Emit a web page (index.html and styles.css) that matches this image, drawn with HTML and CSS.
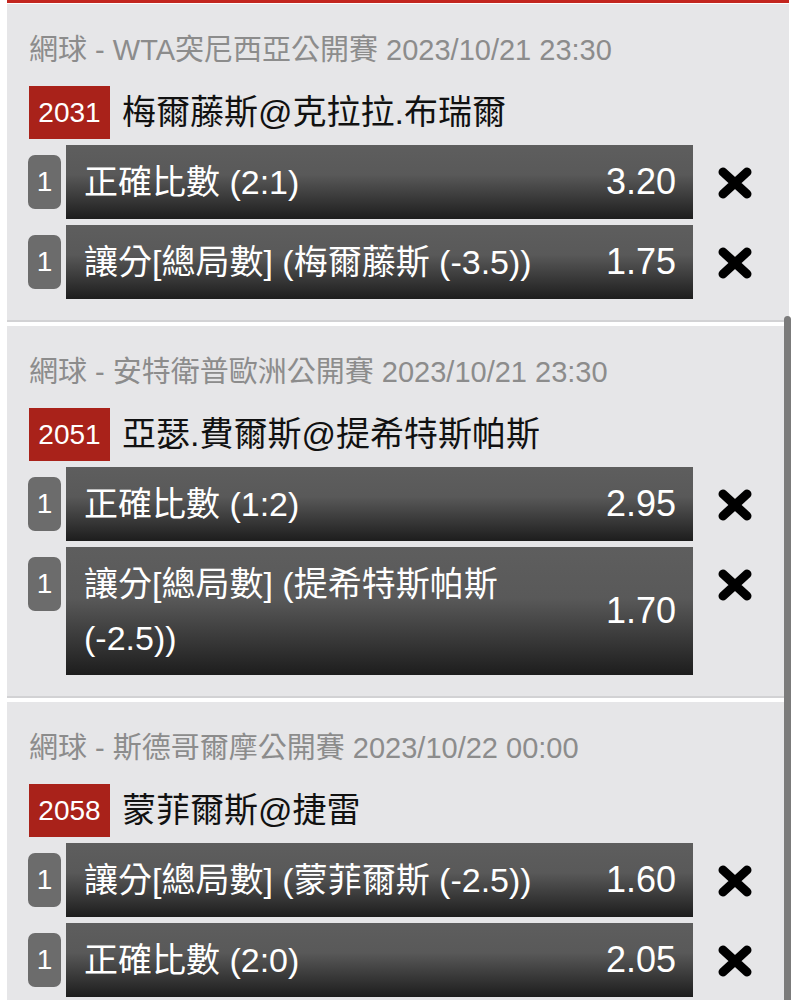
FILE: index.html
```html
<!DOCTYPE html>
<html>
  <head>
    <meta content="text/html; charset=utf-8" http-equiv="content-type">
    <title>投注單</title>
    <link rel="stylesheet" href="styles.css">
  </head>
  <body>
    <div class="slip">
      <div class="topbar"></div>

      <div class="event">
        <div class="league">網球 - WTA突尼西亞公開賽 2023/10/21 23:30</div>
        <div class="match">
          <span class="code">2031</span>
          <span class="teams">梅爾藤斯@克拉拉.布瑞爾</span>
        </div>
        <div class="bet">
          <span class="qty">1</span>
          <div class="pick">
            <span class="label">正確比數 (2:1)</span>
            <span class="odds">3.20</span>
          </div>
          <span class="remove"><svg viewBox="0 0 34 32" width="34" height="32"><path d="M5 5 L29 27 M29 5 L5 27"/></svg></span>
        </div>
        <div class="bet">
          <span class="qty">1</span>
          <div class="pick">
            <span class="label">讓分[總局數] (梅爾藤斯 (-3.5))</span>
            <span class="odds">1.75</span>
          </div>
          <span class="remove"><svg viewBox="0 0 34 32" width="34" height="32"><path d="M5 5 L29 27 M29 5 L5 27"/></svg></span>
        </div>
      </div>

      <div class="event">
        <div class="league">網球 - 安特衛普歐洲公開賽 2023/10/21 23:30</div>
        <div class="match">
          <span class="code">2051</span>
          <span class="teams">亞瑟.費爾斯@提希特斯帕斯</span>
        </div>
        <div class="bet">
          <span class="qty">1</span>
          <div class="pick">
            <span class="label">正確比數 (1:2)</span>
            <span class="odds">2.95</span>
          </div>
          <span class="remove"><svg viewBox="0 0 34 32" width="34" height="32"><path d="M5 5 L29 27 M29 5 L5 27"/></svg></span>
        </div>
        <div class="bet">
          <span class="qty">1</span>
          <div class="pick">
            <span class="label">讓分[總局數] (提希特斯帕斯 (-2.5))</span>
            <span class="odds">1.70</span>
          </div>
          <span class="remove"><svg viewBox="0 0 34 32" width="34" height="32"><path d="M5 5 L29 27 M29 5 L5 27"/></svg></span>
        </div>
      </div>

      <div class="event">
        <div class="league">網球 - 斯德哥爾摩公開賽 2023/10/22 00:00</div>
        <div class="match">
          <span class="code">2058</span>
          <span class="teams">蒙菲爾斯@捷雷</span>
        </div>
        <div class="bet">
          <span class="qty">1</span>
          <div class="pick">
            <span class="label">讓分[總局數] (蒙菲爾斯 (-2.5))</span>
            <span class="odds">1.60</span>
          </div>
          <span class="remove"><svg viewBox="0 0 34 32" width="34" height="32"><path d="M5 5 L29 27 M29 5 L5 27"/></svg></span>
        </div>
        <div class="bet">
          <span class="qty">1</span>
          <div class="pick">
            <span class="label">正確比數 (2:0)</span>
            <span class="odds">2.05</span>
          </div>
          <span class="remove"><svg viewBox="0 0 34 32" width="34" height="32"><path d="M5 5 L29 27 M29 5 L5 27"/></svg></span>
        </div>
      </div>

      <div class="scrollbar"></div>
    </div>
  </body>
</html>
```

FILE: styles.css
```css
html, body {
    height: 100%;
    overflow: hidden;
}

body {
    margin: 0;
    background-color: #fff;
    font-family: "Liberation Sans", "Noto Sans CJK TC", sans-serif;
    color: #111;
}

.slip {
    position: relative;
    margin: 0 11px 0 7px;
}

.topbar {
    height: 3px;
    background-color: #c3261f;
    margin-bottom: 1px;
}

.event {
    background-color: #e6e6e8;
    padding: 28px 0 21px 22px;
    border-bottom: 2px solid #d2d2d4;
    margin-bottom: 4px;
}

.league {
    font-size: 29px;
    line-height: 36px;
    color: #8c8c8c;
    white-space: nowrap;
}

.match {
    display: flex;
    align-items: center;
    margin-top: 18px;
}

.code {
    width: 81px;
    height: 53px;
    line-height: 53px;
    text-align: center;
    background-color: #a9221a;
    color: #fff;
    font-size: 28px;
}

.teams {
    margin-left: 12px;
    font-size: 34px;
    line-height: 53px;
    color: #111;
}

.bet {
    display: flex;
    align-items: flex-start;
    margin-top: 6px;
}

.qty {
    width: 33px;
    height: 54px;
    line-height: 54px;
    margin-top: 10px;
    margin-right: 5px;
    margin-left: -1px;
    border-radius: 7px;
    background-color: #6c6c6c;
    color: #fff;
    font-size: 28px;
    text-align: center;
}

.pick {
    width: 627px;
    box-sizing: border-box;
    display: flex;
    align-items: center;
    padding: 10px 17px 10px 18px;
    background: linear-gradient(to bottom, #5e5e5e 0%, #595959 40%, #1d1d1d 100%);
    color: #fff;
}

.label {
    flex: 1;
    font-size: 34px;
    line-height: 54px;
}

.odds {
    width: 110px;
    text-align: right;
    font-size: 36px;
    line-height: 54px;
}

.remove {
    width: 84px;
    display: flex;
    justify-content: center;
    padding-top: 22px;
}

.remove path {
    stroke: #000;
    stroke-width: 9;
    stroke-linecap: round;
    fill: none;
}

.scrollbar {
    position: absolute;
    left: 777px;
    top: 316px;
    width: 7px;
    height: 700px;
    border-radius: 4px 4px 0 0;
    background-color: #7b7b7b;
}
```
